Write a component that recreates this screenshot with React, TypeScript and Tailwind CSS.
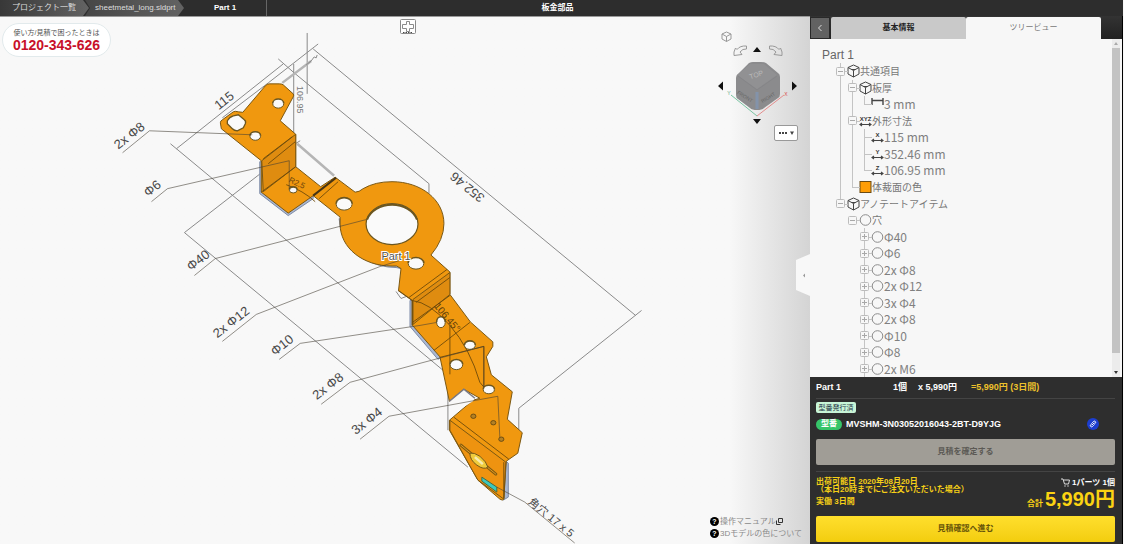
import React from "react";

type Guide = "none" | "line" | "end" | "elbow" | "tee" | "minus" | "minusTop" | "minusEnd" | "minusOnly" | "plus";
type IconKind = "cube" | "span" | "xyz" | "x" | "y" | "z" | "color" | "circle";
type Row = { label: string; icon: IconKind; guides: Guide[]; latin?: boolean };

const rows: Row[] = [
  { label: "共通項目", icon: "cube", guides: ["minus"] },
  { label: "板厚", icon: "cube", guides: ["line", "minus"] },
  { label: "3 mm", icon: "span", guides: ["line", "line", "elbow"], latin: true },
  { label: "外形寸法", icon: "xyz", guides: ["line", "minus"] },
  { label: "115 mm", icon: "x", guides: ["line", "line", "tee"], latin: true },
  { label: "352.46 mm", icon: "y", guides: ["line", "line", "tee"], latin: true },
  { label: "106.95 mm", icon: "z", guides: ["line", "line", "elbow"], latin: true },
  { label: "体裁面の色", icon: "color", guides: ["line", "elbow"] },
  { label: "アノテートアイテム", icon: "cube", guides: ["minusEnd"] },
  { label: "穴", icon: "circle", guides: ["none", "minusOnly"] },
  ...["Φ40", "Φ6", "2x Φ8", "2x Φ12", "3x Φ4", "2x Φ8", "Φ10", "Φ8", "2x M6"].map(
    (label): Row => ({ label, icon: "circle", guides: ["none", "none", "plus"], latin: true })
  ),
];

function GuideCell({ kind }: { kind: Guide }) {
  const full = kind === "line" || kind === "tee" || kind === "minus" || kind === "plus";
  const half = kind === "elbow" || kind === "minusEnd";
  const box = kind === "plus" || kind.startsWith("minus");
  const arm = box || kind === "elbow" || kind === "tee";
  return (
    <span className="relative flex w-3 shrink-0 items-center justify-center self-stretch">
      {full && <span className="absolute inset-y-0 left-1.5 w-px bg-[#c4c4c4]" />}
      {half && <span className="absolute top-0 left-1.5 h-1/2 w-px bg-[#c4c4c4]" />}
      {arm && <span className="absolute top-1/2 -right-0.5 left-1.5 h-px bg-[#c4c4c4]" />}
      {box && (
        <svg viewBox="0 0 9 9" className="relative h-[9px] w-[9px]" fill="#f7f7f7" stroke="#a8a8a8">
          <rect x="0.5" y="0.5" width="8" height="8" rx="1" stroke="#bcbcbc" />
          <path d="M2 4.5h5" />
          {kind === "plus" && <path d="M4.5 2v5" />}
        </svg>
      )}
    </span>
  );
}

function RowIcon({ kind }: { kind: IconKind }) {
  const letters: Partial<Record<IconKind, string>> = { xyz: "XYZ", x: "X", y: "Y", z: "Z" };
  return (
    <svg viewBox="0 0 13 14" className="h-3.5 w-[13px] shrink-0" fill="none" stroke="#444" strokeWidth="1">
      {kind === "cube" && (
        <path d="M6.5 1 12 3.5v6.5L6.5 13 1 10V3.5zM1 3.5 6.5 6.5 12 3.5M6.5 6.5V13M4.5 5.5h4" />
      )}
      {kind === "circle" && <circle cx="6.5" cy="7" r="5.3" stroke="#8c8c8c" />}
      {kind === "color" && <rect x="1" y="1.5" width="11" height="11" fill="#ff9d05" stroke="#6b4a13" />}
      {kind === "span" && <path d="M1 1v7M12 1v7M1 3.5h11" strokeWidth="1.4" />}
      {letters[kind] && (
        <>
          <path d="M1 10.5h11M3 9 1 10.5 3 12M10 9l2 1.5-2 1.5" strokeWidth="1.1" />
          <text x="6.5" y="6.5" textAnchor="middle" fontSize="6" fontWeight="bold" fill="#333" stroke="none">
            {letters[kind]}
          </text>
        </>
      )}
    </svg>
  );
}

const leaders = [
  "122,152 149,130 252,134",
  "151,201 167,188 289,160 289,188",
  "194,275 215,258 366,219",
  "222,341 256,314 380,266 403,259",
  "279,359 300,343 420,325 437,322",
  "321,404 350,382 420,363 484,346 484,387",
  "360,439 389,416 498,396 500,437",
  "497,487 525,502 575,543",
];

const tags = [
  { t: "115", x: 224, y: 100 },
  { t: "2x Φ8", x: 129, y: 135 },
  { t: "Φ6", x: 152, y: 188 },
  { t: "Φ40", x: 198, y: 260 },
  { t: "2x Φ12", x: 231, y: 322 },
  { t: "Φ10", x: 282, y: 345 },
  { t: "2x Φ8", x: 328, y: 386 },
  { t: "3x Φ4", x: 367, y: 421 },
];

const holes = [
  [278, 103, 5.5, 4.3], [255, 135.5, 5.3, 4], [293, 189.5, 3.8, 2.8], [344, 203.5, 8, 6],
  [416, 263, 7.8, 5.6], [441, 322, 4.3, 5.2], [470, 345, 5.4, 4], [456.5, 364.5, 6.3, 4.8], [489, 389.5, 5.6, 4],
];

function Model() {
  return (
    <svg
      viewBox="0 16 810 528"
      className="absolute inset-0 h-full w-full"
      fill="none"
      stroke="#8a8a8a"
      strokeWidth="1"
      role="img"
      aria-label="Part 1"
    >
      <g>
        <path d="M170 143 448 374V430M176 148 283 63M278 58 294 72 429 183V193M268 82 318 43M222 117 268 82M313 48 636 315M642 310 519 408V440M260 173 184 232 468 467M307 32V93M293.500 63V134" />
        <path d="M282 82 311 60M297 143 334 175" stroke="#b5b5b5" strokeWidth="2.500" />
        <path d="M311 60l3-4 2 1 1-3M306 64l5-4M295 143l5-3M396 291l5 7 8-3" />
      </g>

      <g stroke="#7d8ba6" fill="#a9b7d2">
        <path d="M259.500 161V193L288 215l25-17v-5l-25 18-24-20V161z" />
        <path d="M339 218q0 22 24 40 16 9 33 9l5 1v-4zM410 300v26l28 33 4-3-26-32V300z" />
        <path d="M506 461l2.500 2v34l-5 3z" />
      </g>

      <g stroke="#7a5712" fill="#f0980f">
        <path d="M220 122q0-2 2-3l11-8q2-1 5 0l4.500.500L265 85q2-2 4-2h10q3 0 4 1l10 9q1 1 0 3l-13 24 15.500 13.500V166L320.500 186 335 176.500 355 191.500q4 0 8-3.500 12-7 29-7c29 0 52 18 52 42q0 16-13 31.500l19 17V294l20.500 27.500L493 341.500V346L486.500 356.500l5 18L512.500 391.500 507.500 419l15 13.500L518 453l-11.500 8L504 499q-1 2-4 0L478 480 449.500 430V420L473 400l7-2-16-9L449.500 401 440 356.500 412.500 325V300L398.500 290 401 268l-4.500-2.500H392c-29 0-52-18-52-42v-7L313 195 288 212.500 261 191.500V160L221 128z" />
        <path d="M261.500 160 295.500 133.500V166L263 191z" fill="#df8c10" />
        <path d="M413 299 450 272V294L413 324z" fill="#df8c10" />
        <path d="M450 420 506 462 504 499 478 480 450 430z" fill="#ee9310" />
      </g>

      <g stroke="#6e4a0a" strokeWidth="0.900">
        <path d="M263 158 292 136M268 163 295 141M295.500 166 261 191.500M313 195 335 177M319 198 338 181" />
        <path d="M409 297 447 269M416 302 450 277M412.500 322 450 295M434 350 470 322M440 357 484 346M484 346V387M450 324v50" />
        <path d="M412 300Q430 302 450 325T480 382L485 388M454 417 509 459M286 184Q303 190 315 201" />
        <path d="M398 290 412 300V325M504 462V498" />
      </g>
      <path d="M313 195 336 177" stroke="#463414" strokeWidth="2" />

      <g fill="#fafafa" stroke="#6b5620">
        {holes.map(([x, y, a, b]) => (
          <g key={`${x}-${y}`}>
            <ellipse cx={x} cy={y} rx={a} ry={b} />
            <path d={`M${x - a} ${y - 0.5}A${a} ${b} 0 0 1 ${x + a} ${y - 0.5}`} strokeWidth="1.600" />
          </g>
        ))}
        <path d="M227 120q2-4 6-5l5-1 6 5q2 1 1 4l-2 4-6 3q-3 0-5-2l-5-5z" strokeWidth="1.300" />
        <ellipse cx="392" cy="223.500" rx="26" ry="20.500" strokeWidth="1.200" />
        <path d="M367 219a26 20.500 0 0 1 50 0" strokeWidth="2" />
      </g>
      <g fill="#b38024" stroke="#59400f" strokeWidth="0.800">
        <ellipse cx="473.500" cy="416" rx="2.600" ry="2.200" />
        <ellipse cx="493.500" cy="422.500" rx="2.600" ry="2.200" />
        <ellipse cx="501.500" cy="439" rx="2.600" ry="2.200" />
      </g>
      <path d="M450 401 464 389 475 398 473 401 462 408z" fill="#f8f8f8" stroke="none" />
      <path d="M449.500 401 464 389 475 398" stroke="#7a7a85" strokeWidth="1.500" />
      <path d="M461 445 496 474" stroke="#825b10" strokeWidth="3" strokeLinecap="round" />
      <path d="M461 445 496 474" stroke="#e59c20" strokeLinecap="round" />
      <path d="M470 453q4-1 10 3 7 6 8 11-4 3-11-2-7-5-7-12z" fill="#efcb3c" stroke="#735719" />
      <path d="M475 457l8 7" stroke="#f7ecb1" strokeWidth="2.500" />
      <path d="M482 477l15 10v5l-15-11z" fill="#3cc8be" stroke="#426c48" />

      <g stroke="#453f35" strokeOpacity="0.650" strokeWidth="0.900">
        {leaders.map((p) => (
          <polyline key={p} points={p} />
        ))}
      </g>

      <g fill="#484848" stroke="none" fontSize="13" textAnchor="middle" fontFamily="Liberation Sans, Arial, sans-serif">
        {tags.map(({ t, x, y }) => (
          <text key={`${t}-${x}`} transform={`translate(${x} ${y}) rotate(-38)`} dy="4">
            {t}
          </text>
        ))}
        <text transform="translate(467 187) rotate(219)" dy="5">352.46</text>
        <text transform="translate(300 99) rotate(90)" dy="3" fontSize="9" fill="#777">106.95</text>
        <text transform="translate(297 182) rotate(25)" dy="3" fontSize="8" fill="#6a430b">R2.5</text>
        <text transform="translate(447 317) rotate(50)" dy="3" fontSize="10" fill="#5b3c0b">106.45°</text>
        <text
          transform="translate(551 518) rotate(39)"
          dy="3"
          fontSize="11"
          fontFamily="Liberation Sans, Noto Sans CJK JP, sans-serif"
        >
          角穴 17 x 5
        </text>
        <text x="396" y="259" fontSize="11" fill="#555" stroke="#fff" strokeWidth="2" paintOrder="stroke">
          Part 1
        </text>
      </g>
    </svg>
  );
}

function ViewCube() {
  return (
    <svg viewBox="715 26 86 98" className="absolute top-[10px] right-[9px] h-[98px] w-[86px]" fill="none">
      <path d="M726.500 31 731 33v5l-4.500 2.500L722 38v-5zM722 33l4.500 2.500L731 33M726.500 35.500v5" stroke="#999" />
      <path d="M734 51l1.500-4 1.500 1.500q3-4 9.500-3.500v3q-4-.5-6.500 3l2 2.500-8 1zM782 51l-1.500-4-1.500 1.500q-3-4-9.500-3.500v3q4-.5 6.500 3l-2 2.500 8 1z" stroke="#999" />
      <path d="M753 51l4-5 4 5zM753 118l4 5 4-5zM723 80.500l-5 4.500 5 4.500zM792 80.500l5 4.500-5 4.500z" fill="#111" />
      <path d="M731 94 757 115" stroke="#79c5a2" />
      <path d="M757 115 784 94" stroke="#e38c8c" />
      <path d="M749 62q2-1 4-1h8q3 0 5 1l12 10q2 1 2 4v17q0 3-2 4l-14 10q-2 2-7 2t-7-2L738 98q-2-1-2-4V77q0-3 2-4z" fill="#8b8b8d" />
      <path d="M750 63h14l13 11-20 14-20-14z" fill="#919193" />
      <path d="M757 91v17" stroke="#8393aa" strokeWidth="3" />
      <path d="M738 75l19 14 20-14" stroke="#858588" />
      <g fontFamily="Liberation Sans, Arial, sans-serif" textAnchor="middle" fill="#b9b9b9" fontSize="7">
        <text transform="translate(757 76) rotate(-18)">TOP</text>
        <text transform="translate(744 97) rotate(32)" fontSize="5" fill="#666">FRONT</text>
        <text transform="translate(769 98) rotate(-32)" fontSize="5" fill="#666">RIGHT</text>
        <text x="729" y="94" fontSize="5" fill="#58a982">Y</text>
        <text x="786" y="95" fontSize="5" fill="#d94a4a">X</text>
      </g>
    </svg>
  );
}

function HelpLink({ children }: { children: React.ReactNode }) {
  return (
    <a href="#help" className="flex items-center gap-px">
      <span className="flex h-[9px] w-[9px] items-center justify-center rounded-full bg-black text-[7px] font-bold text-white">
        ?
      </span>
      <span className="flex items-center text-[8px] text-[#8a8a8a]">{children}</span>
    </a>
  );
}

export default function App() {
  return (
    <div className="flex h-screen min-h-[544px] flex-col bg-[#f8f8f8] pr-px font-['Liberation_Sans','Noto_Sans_CJK_JP',sans-serif] leading-none">
      <header className="relative flex h-4 shrink-0 items-stretch bg-[#2d2d2d] text-[8px] text-[#ddd]">
        <nav className="flex items-stretch" aria-label="breadcrumb">
          <a
            href="#projects"
            className="flex w-[89px] items-center bg-linear-to-r from-[#383838] to-[#636363] pl-3 [clip-path:polygon(0_0,83px_0,100%_50%,83px_100%,0_100%)]"
          >
            プロジェクト一覧
          </a>
          <a
            href="#file"
            className="-ml-1 flex w-[99px] items-center bg-linear-to-r from-[#464646] to-[#636363] pl-[10px] [clip-path:polygon(0_0,93px_0,100%_50%,93px_100%,0_100%,5px_50%)]"
          >
            sheetmetal_long.sldprt
          </a>
          <span className="flex w-[83px] items-center justify-center border-r border-[#666] font-bold text-white">
            Part 1
          </span>
        </nav>
        <h1 className="absolute inset-0 m-auto flex w-20 translate-x-[-4px] items-center justify-center font-bold text-white">
          板金部品
        </h1>
      </header>

      <div className="flex min-h-0 flex-1">
        <main className="relative min-w-0 flex-1 border-t border-[#999] bg-linear-to-r from-[#f8f8f8] from-90% to-[#d4d4d4]">
          <Model />
          <aside className="absolute top-1.5 left-0.5 flex h-[34px] w-[109px] flex-col items-center justify-center gap-0.5 rounded-full border border-[#e2eaec] bg-white">
            <span className="text-[7px] whitespace-nowrap text-[#555]">使い方/見積で困ったときは</span>
            <strong className="text-sm leading-[14px] whitespace-nowrap text-[#c8102a]">0120-343-626</strong>
          </aside>
          <button aria-label="全体表示" className="absolute top-0.5 left-1/2 ml-[-5px] h-4 w-4">
            <svg viewBox="0 0 16 16" className="h-4 w-4" fill="#fff" stroke="#8a8a8a">
              <rect x="0.500" y="0.500" width="15" height="14" rx="1" />
              <path d="M6.500 2.500h3v3h4v4h-4v3h-3v-3h-4v-4h4z" />
              <path d="M3 13.500h10" strokeDasharray="1.500 1" stroke="#444" />
            </svg>
          </button>
          <ViewCube />
          <button
            aria-label="表示メニュー"
            className="absolute top-[108px] right-3 flex h-4 w-6 items-center justify-center rounded-xs border border-[#999] bg-white"
          >
            <svg viewBox="0 0 18 6" className="h-1.5 w-[18px]" fill="#444">
              <path d="M2 2h2v2H2zM5 2h2v2H5zM8 2h2v2H8zM13 1.500h4L15 5z" />
            </svg>
          </button>
          <button aria-label="パネルを閉じる" className="absolute top-[237px] right-0 h-[42px] w-3.5">
            <svg viewBox="0 0 14 42" className="h-[42px] w-3.5" fill="#f8f8f8">
              <path d="M14 0v42L0 36V6z" />
              <path d="M9 19.500 7 21.500l2 2z" fill="#999" />
            </svg>
          </button>
          <div className="absolute right-2 bottom-1.5 flex flex-col gap-[3px]">
            <HelpLink>
              操作マニュアル
              <svg viewBox="0 0 7 7" className="h-[7px] w-[7px]" fill="none" stroke="#333">
                <path d="M2.500.500h4v4h-4zM.500 2.500v4h4" />
              </svg>
            </HelpLink>
            <HelpLink>3Dモデルの色について</HelpLink>
          </div>
        </main>

        <aside className="flex w-[313px] shrink-0 flex-col border-r border-black bg-[#f7f7f7]">
          <div role="tablist" className="flex h-[23px] shrink-0 bg-linear-to-b from-[#333] to-[#222] pt-px text-[8px]">
            <button aria-label="戻る" className="flex w-5 items-center justify-center border border-[#292929] bg-[#626262]">
              <svg viewBox="0 0 6 8" className="h-2 w-1.5" fill="none" stroke="#ddd">
                <path d="M4.500 1 1.500 4l3 3" />
              </svg>
            </button>
            <button role="tab" aria-selected="false" className="ml-px flex-1 rounded-t-xs bg-[#c9c9c9] font-bold text-[#222]">
              基本情報
            </button>
            <button role="tab" aria-selected="true" className="mr-[21px] flex-1 rounded-t-xs bg-[#f7f7f7] text-[#777]">
              ツリービュー
            </button>
          </div>

          <div className="flex min-h-0 flex-1">
            <div className="flex min-w-0 flex-1 flex-col overflow-hidden">
              <h2 className="pt-2 pl-3 text-xs text-[#666]">Part 1</h2>
              <ul className="flex flex-1 flex-col pl-6">
                {rows.map((r, i) => (
                  <li key={i} className="flex min-h-0 flex-1 items-center">
                    {r.guides.map((g, j) => (
                      <GuideCell key={j} kind={g} />
                    ))}
                    <span className="w-px" />
                    <RowIcon kind={r.icon} />
                    <span
                      className={
                        r.latin
                          ? "font-['Noto_Sans_CJK_JP',sans-serif] text-xs leading-none text-[#808080]"
                          : "font-['Noto_Sans_CJK_JP',sans-serif] text-[10px] leading-none text-[#777]"
                      }
                    >
                      {r.label}
                    </span>
                  </li>
                ))}
              </ul>
            </div>
            <div className="mr-0.5 flex w-2 flex-col items-center bg-[#ececec]">
              <svg viewBox="0 0 8 9" className="h-[9px] w-2" fill="#aaa">
                <path d="M2 6l2-3 2 3z" />
              </svg>
              <div className="w-2 grow-[20] bg-[#c3c3c3]" />
              <div className="grow" />
              <svg viewBox="0 0 8 9" className="h-[9px] w-2" fill="#333">
                <path d="M2 3l2 3 2-3z" />
              </svg>
            </div>
          </div>

          <section className="flex h-[167px] shrink-0 flex-col bg-[#2e2e2e] pr-[7px] pl-1.5 text-white">
            <div className="flex h-[22px] items-center border-b border-[#444] text-[9px] font-bold">
              <span className="w-[77px]">Part 1</span>
              <span className="w-[25px]">1個</span>
              <span className="w-[53px]">x 5,990円</span>
              <span className="text-[#edc12c]">=5,990円 (3日間)</span>
            </div>
            <span className="mt-[3px] flex h-[11px] w-10 items-center justify-center rounded-xs bg-[#c8f5d7] text-[7px] text-[#234]">
              型番発行済
            </span>
            <div className="mt-[5px] flex h-3 items-center gap-1">
              <span className="flex h-[11px] w-[26px] items-center justify-center rounded-full bg-[#36c569] text-[8px] font-bold">
                型番
              </span>
              <span className="text-[9px] font-bold">MVSHM-3N03052016043-2BT-D9YJG</span>
              <button aria-label="リンク" className="mr-4 ml-auto flex h-3 w-3 items-center justify-center rounded-full bg-[#1c3ed0]">
                <svg viewBox="0 0 8 8" className="h-2 w-2" fill="none" stroke="#fff" strokeLinecap="round">
                  <path d="M3 5l2-2M3.500 2.500l1-1q1-.8 1.800 0t0 1.800l-1 1M4.500 5.500l-1 1q-1 .8-1.800 0t0-1.800l1-1" />
                </svg>
              </button>
            </div>
            <button className="mt-[9px] h-[26px] rounded-xs bg-[#a09d96] text-[8px] font-bold text-[#5b5954]">
              見積を確定する
            </button>
            <div className="mt-1.5 flex justify-between border-t border-[#444] pt-1.5">
              <div className="flex flex-col text-[8px] font-bold text-[#f5cf17]">
                <span>出荷可能日 2020年08月20日</span>
                <span>（本日20時までにご注文いただいた場合）</span>
                <span className="mt-1">実働 3日間</span>
              </div>
              <div className="flex flex-col items-end font-bold whitespace-nowrap">
                <span className="flex items-center gap-0.5 text-[8px]">
                  <svg viewBox="0 0 9 9" className="h-[9px] w-[9px]" fill="none" stroke="#ddd">
                    <path d="M0 1h2l1.500 5h4l1-4H2.500" />
                    <path d="M3.500 8h1M6.500 8h1" strokeWidth="1.500" />
                  </svg>
                  1パーツ 1個
                </span>
                <span className="flex items-baseline gap-0.5 text-[#fbd312]">
                  <span className="text-[8px]">合計</span>
                  <span className="text-xl leading-6">5,990円</span>
                </span>
              </div>
            </div>
            <button className="mt-auto mb-0.5 h-[26px] rounded-xs bg-linear-to-b from-[#ffdf2c] to-[#f3cd0c] text-[8px] font-bold text-[#665409]">
              見積確認へ進む
            </button>
          </section>
        </aside>
      </div>
    </div>
  );
}
